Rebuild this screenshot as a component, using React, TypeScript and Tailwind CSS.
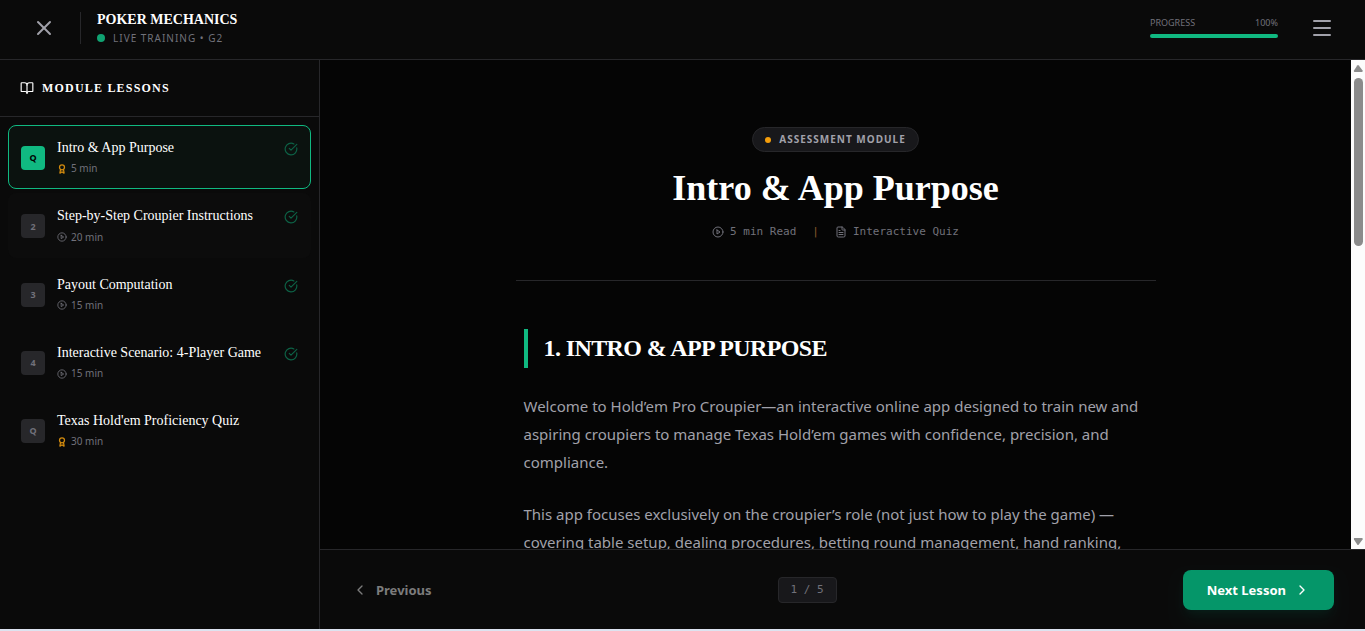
import { Award, BookOpen, ChevronLeft, ChevronRight, CircleCheckBig, FileText, Menu, X } from "lucide-react";

type Lesson = {
    badge: string;
    title: string;
    time: string;
    quiz?: boolean;
    done?: boolean;
    style: string;
    badgeStyle: string;
};

const idle = "bg-[#27272a] text-[#71717a]";

const lessons: Lesson[] = [
    { badge: "Q", title: "Intro & App Purpose", time: "5 min", quiz: true, done: true, style: "border-[#10b981] bg-[#0b120f]", badgeStyle: "bg-[#10b981] text-black" },
    { badge: "2", title: "Step-by-Step Croupier Instructions", time: "20 min", done: true, style: "border-transparent bg-[#0c0c0c]", badgeStyle: idle },
    { badge: "3", title: "Payout Computation", time: "15 min", done: true, style: "border-transparent", badgeStyle: idle },
    { badge: "4", title: "Interactive Scenario: 4-Player Game", time: "15 min", done: true, style: "border-transparent", badgeStyle: idle },
    { badge: "Q", title: "Texas Hold'em Proficiency Quiz", time: "30 min", quiz: true, style: "border-transparent", badgeStyle: idle },
];

function PlayIcon({ size }: { size: number }) {
    return (
        <svg width={size} height={size} viewBox="0 0 24 24" fill="none" stroke="currentColor" strokeWidth="2" strokeLinecap="round" strokeLinejoin="round">
            <circle cx="12" cy="12" r="10" />
            <polygon points="10 8 16 12 10 16 10 8" />
        </svg>
    );
}

function Header() {
    return (
        <header className="flex h-[60px] shrink-0 items-center justify-between border-b border-[#27272a] bg-[#0a0a0a] pr-[23px] pb-1 pl-6">
            <div className="flex items-center">
                <button type="button" aria-label="Close" className="p-2 text-[#a1a1aa]">
                    <X size={24} />
                </button>
                <div className="ml-4 h-8 w-px bg-[#27272a]" />
                <div className="ml-4 flex flex-col">
                    <h1 className="font-['Liberation_Serif',serif] text-[14px] leading-5 font-bold text-white uppercase">Poker Mechanics</h1>
                    <div className="flex items-center gap-2">
                        <span className="size-2 rounded-full bg-[#10a372]" />
                        <span className="text-[10px] leading-4 tracking-widest text-[#71717a] uppercase">Live Training • G2</span>
                    </div>
                </div>
            </div>
            <div className="flex items-center gap-6">
                <div className="w-32 pb-[3px]">
                    <div className="mb-[3px] flex justify-between text-[9px] leading-4 text-[#71717a] uppercase">
                        <span>Progress</span>
                        <span>100%</span>
                    </div>
                    <div className="h-1 rounded-full bg-[#10b981]" />
                </div>
                <button type="button" aria-label="Menu" className="p-2 text-[#a1a1aa]">
                    <Menu size={24} />
                </button>
            </div>
        </header>
    );
}

function LessonItem({ lesson }: { lesson: Lesson }) {
    return (
        <button type="button" className={`flex w-full items-start gap-3 rounded-lg border p-3 text-left ${lesson.style}`}>
            <span className={`mt-2 flex size-6 shrink-0 items-center justify-center rounded text-[9px] font-bold ${lesson.badgeStyle}`}>{lesson.badge}</span>
            <span className="flex flex-1 flex-col gap-1">
                <span className="font-['Liberation_Serif',serif] text-[14px] leading-snug text-white">{lesson.title}</span>
                <span className="flex items-center gap-1 text-[10px] leading-[15px] text-[#71717a]">
                    {lesson.quiz ? <Award size={10} strokeWidth={3} className="text-[#d18a0e]" /> : <PlayIcon size={10} />}
                    {lesson.time}
                </span>
            </span>
            {lesson.done && <CircleCheckBig size={14} className="mt-1 shrink-0 text-[#0d6246]" />}
        </button>
    );
}

function Sidebar() {
    return (
        <aside className="flex w-80 shrink-0 flex-col border-r border-[#27272a] bg-[#0a0a0a]">
            <div className="flex items-center gap-2 border-b border-[#27272a] p-5 text-white">
                <BookOpen size={14} />
                <h2 className="font-['Liberation_Serif',serif] text-[12px] leading-4 font-bold tracking-widest uppercase">Module Lessons</h2>
            </div>
            <nav className="flex flex-col gap-1 p-2">
                {lessons.map((lesson) => (
                    <LessonItem key={lesson.title} lesson={lesson} />
                ))}
            </nav>
        </aside>
    );
}

function Scrollbar() {
    return (
        <div aria-hidden="true" className="flex w-[14px] shrink-0 flex-col items-center bg-[#fcfcfc] text-[#8b8b8b]">
            <svg viewBox="0 0 14 18" className="h-[18px] w-[14px] shrink-0" fill="currentColor">
                <path d="M6.2 5.5Q7 4.5 7.8 5.5L11.6 10.6Q12 12 11 12H3.5Q2.5 12 3 10.6Z" />
            </svg>
            <div className="flex w-full flex-1 justify-center">
                <div className="h-[37%] w-[9px] rounded-full bg-[#8b8b8b]" />
            </div>
            <svg viewBox="0 0 14 18" className="h-[18px] w-[14px] shrink-0" fill="currentColor">
                <path d="M6.2 13.5Q7 14.5 7.8 13.5L11.6 8.4Q12 7 11 7H3.5Q2.5 7 3 8.4Z" />
            </svg>
        </div>
    );
}

function LessonContent() {
    return (
        <article className="mx-auto w-full max-w-[640px] pt-[67px]">
            <div className="flex flex-col items-center border-b border-[#27272a] pb-10">
                <div className="flex items-center gap-2 rounded-full border border-[#27272a] bg-[#18181b] px-3 py-1 text-[10px] leading-[15px] font-bold tracking-widest text-[#a1a1aa] uppercase">
                    <span className="size-1.5 rounded-full bg-[#f59e0b]" />
                    Assessment Module
                </div>
                <h2 className="mt-4 font-['Liberation_Serif',serif] text-[36px] leading-10 font-bold text-white">Intro &amp; App Purpose</h2>
                <div className="mt-4 flex items-center gap-4 font-['DejaVu_Sans_Mono',monospace] text-[11px] leading-4 text-[#71717a]">
                    <span className="flex items-center gap-1.5">
                        <PlayIcon size={12} />
                        5 min Read
                    </span>
                    <span className="text-[#8a5a2b]">|</span>
                    <span className="flex items-center gap-1.5">
                        <FileText size={12} />
                        Interactive Quiz
                    </span>
                </div>
            </div>
            <div className="mt-12 px-2">
                <h3 className="border-l-4 border-[#10b981] py-1 pl-4 font-['Liberation_Serif',serif] text-[24px] leading-[31px] font-bold tracking-tight text-white uppercase">1. Intro &amp; App Purpose</h3>
                <div className="mt-6 space-y-6 text-[15px] leading-7 text-[#a1a1aa]">
                    <p>Welcome to Hold’em Pro Croupier—an interactive online app designed to train new and aspiring croupiers to manage Texas Hold’em games with confidence, precision, and compliance.</p>
                    <p>This app focuses exclusively on the croupier’s role (not just how to play the game) — covering table setup, dealing procedures, betting round management, hand ranking,</p>
                </div>
            </div>
        </article>
    );
}

function Footer() {
    return (
        <footer className="flex h-20 shrink-0 items-center justify-between border-t border-[#27272a] bg-[#0a0a0a] pr-[31px] pl-8">
            <button type="button" className="flex items-center gap-2 text-[13px] leading-5 font-bold text-[#7c7c7c]">
                <ChevronLeft size={16} />
                Previous
            </button>
            <span className="rounded border border-[#27272a] bg-[#18181b] px-3 py-1 font-['DejaVu_Sans_Mono',monospace] text-[11px] leading-4 text-[#71717a]">1 / 5</span>
            <button type="button" className="flex items-center gap-2 rounded-lg bg-[#059669] px-6 py-2.5 text-[13px] leading-5 font-bold text-white shadow-lg shadow-emerald-900/20">
                Next Lesson
                <ChevronRight size={16} />
            </button>
        </footer>
    );
}

export default function App() {
    return (
        <div className="flex h-screen flex-col overflow-hidden border-b-2 border-[#dde3f0] bg-[#050505] font-['Noto_Sans',sans-serif]">
            <Header />
            <div className="flex min-h-0 flex-1">
                <Sidebar />
                <div className="flex min-w-0 flex-1 flex-col">
                    <div className="flex min-h-0 flex-1">
                        <main className="min-w-0 flex-1 overflow-hidden">
                            <LessonContent />
                        </main>
                        <Scrollbar />
                    </div>
                    <Footer />
                </div>
            </div>
        </div>
    );
}
